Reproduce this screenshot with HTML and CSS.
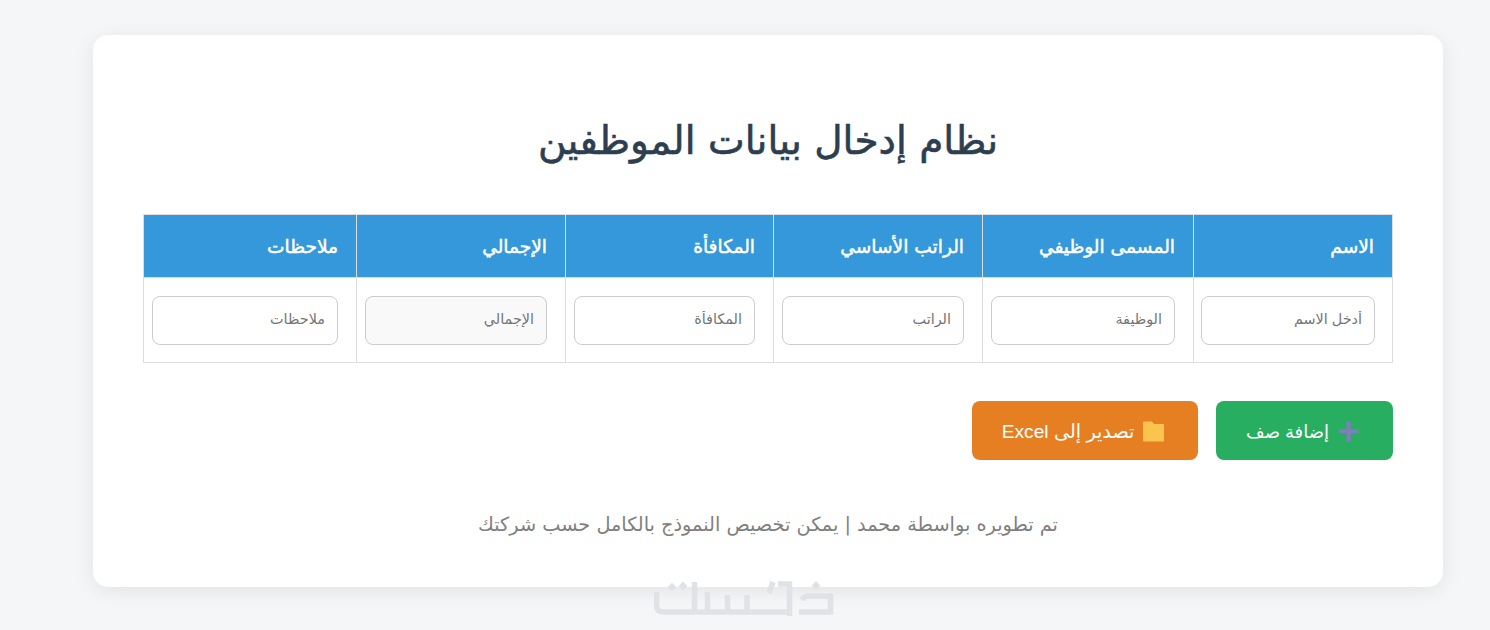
FILE: index.html
```html
<!DOCTYPE html>
<html lang="ar" dir="rtl">
<head>
<meta charset="UTF-8">
<meta name="viewport" content="width=device-width, initial-scale=1.0">
<title>نظام إدخال بيانات الموظفين</title>
<link rel="stylesheet" href="styles.css">
</head>
<body>
<div class="container">
    <h1>نظام إدخال بيانات الموظفين</h1>
    <table>
        <colgroup>
            <col class="col-name">
            <col class="col-job">
            <col class="col-salary">
            <col class="col-bonus">
            <col class="col-total">
            <col class="col-notes">
        </colgroup>
        <thead>
            <tr>
                <th>الاسم</th>
                <th>المسمى الوظيفي</th>
                <th>الراتب الأساسي</th>
                <th>المكافأة</th>
                <th>الإجمالي</th>
                <th>ملاحظات</th>
            </tr>
        </thead>
        <tbody>
            <tr>
                <td><input type="text" placeholder="أدخل الاسم"></td>
                <td><input type="text" placeholder="الوظيفة"></td>
                <td><input type="text" placeholder="الراتب"></td>
                <td><input type="text" placeholder="المكافأة"></td>
                <td><input type="text" class="readonly" placeholder="الإجمالي" readonly></td>
                <td><input type="text" placeholder="ملاحظات"></td>
            </tr>
        </tbody>
    </table>
    <div class="actions">
        <button class="btn btn-add">
            <svg class="icon" viewBox="0 0 21 21" aria-hidden="true"><path d="M8.25 0.5h4.5v7.75h7.75v4h-7.75v8.25h-4.5v-8.25H0.5v-4h7.75z" fill="#7d7fb8"/></svg>
            إضافة صف
        </button>
        <button class="btn btn-export">
            <svg class="icon" viewBox="0 0 21 21" aria-hidden="true"><path d="M1 0.5h8l2 2.5h9q1 0 1 1v15.5q0 1-1 1H1q-1 0-1-1V1.500q0-1 1-1z" fill="#fdc34f"/></svg>
            تصدير إلى Excel
        </button>
    </div>
    <p class="footer">تم تطويره بواسطة محمد | يمكن تخصيص النموذج بالكامل حسب شركتك</p>
</div>
<svg class="watermark" viewBox="0 0 180 38" aria-hidden="true">
    <g class="wm-strokes">
        <path d="M2.500 11v13q0 7 7 7H133"/>
        <path d="M40.500 1v30M53.500 11v20M73.500 14v17M93 14v17"/>
        <path d="M115 12l4-11M124 3h11.500v32"/>
        <path d="M145 31h31.500V15H155q-5 0-7 4"/>
    </g>
    <g class="wm-dots">
        <path d="M13.500 6l4.500-4.500 4.500 4.500-4.500 4.500zM24.500 5l4.500-4.500 4.500 4.500-4.500 4.500zM157.500 4.500l4.500-4.500 4.500 4.500-4.500 4.500z"/>
    </g>
</svg>
</body>
</html>
```

FILE: styles.css
```css
* {
    box-sizing: border-box;
}
html, body {
    height: 100%;
    overflow: hidden;
}
body {
    margin: 0;
    position: relative;
    padding: 35px 47px 0 93px;
    background-color: #f4f6f8;
    font-family: 'DejaVu Sans', sans-serif;
    color: #2c3e50;
}
.container {
    height: 552px;
    padding: 50px;
    background-color: #ffffff;
    border-radius: 15px;
    box-shadow: 0 4px 20px rgba(0, 0, 0, 0.08);
}
h1 {
    margin: 27px 0 45px;
    height: 57px;
    line-height: 57px;
    text-align: center;
    font-size: 39px;
    font-weight: 400;
    -webkit-text-stroke: 0.6px #2c3e50;
    color: #2c3e50;
}
table {
    width: 1249px;
    table-layout: fixed;
    border-collapse: collapse;
}
.col-name { width: 199px; }
.col-job { width: 211px; }
.col-salary { width: 209px; }
.col-bonus { width: 208px; }
.col-total { width: 209px; }
.col-notes { width: 213px; }
th, td {
    border: 1px solid #dddddd;
    text-align: right;
}
th {
    height: 63px;
    padding: 1px 18px 0;
    background-color: #3498db;
    color: #ffffff;
    font-size: 18.600px;
    font-weight: 400;
    -webkit-text-stroke: 0.5px #ffffff;
}
td {
    height: 85px;
    padding: 0 18px 0 8px;
}
td:first-child {
    padding: 0 17px 0 7px;
}
input {
    display: block;
    width: 100%;
    height: 49px;
    padding: 0 12px 2px;
    border: 1px solid #cccccc;
    border-radius: 8px;
    background-color: #ffffff;
    font-family: 'Liberation Sans', 'DejaVu Sans', sans-serif;
    font-size: 14.400px;
    text-align: right;
}
input::placeholder {
    color: #757575;
}
input.readonly {
    background-color: #f9f9f9;
}
.actions {
    display: flex;
    gap: 18px;
    margin-top: 38px;
}
.btn {
    display: flex;
    align-items: center;
    justify-content: center;
    gap: 9px;
    height: 59px;
    padding: 2px 4px 0 0;
    border: none;
    border-radius: 8px;
    color: #ffffff;
    font-family: 'Liberation Sans', 'DejaVu Sans', sans-serif;
    font-size: 18px;
    cursor: pointer;
}
.btn-add {
    width: 177px;
    background-color: #27ae60;
}
.btn-export {
    width: 226px;
    background-color: #e67e22;
    font-size: 19.200px;
}
.icon {
    width: 21px;
    height: 21px;
}
.footer {
    margin: 53px 0 0;
    text-align: center;
    font-size: 19.300px;
    color: #7f7f7f;
}
.watermark {
    position: absolute;
    left: 654px;
    top: 581px;
    width: 180px;
    height: 38px;
}
.wm-strokes path {
    fill: none;
    stroke: #e0e2e5;
    stroke-width: 5.500;
}
.wm-dots path {
    fill: #e0e2e5;
}
```
